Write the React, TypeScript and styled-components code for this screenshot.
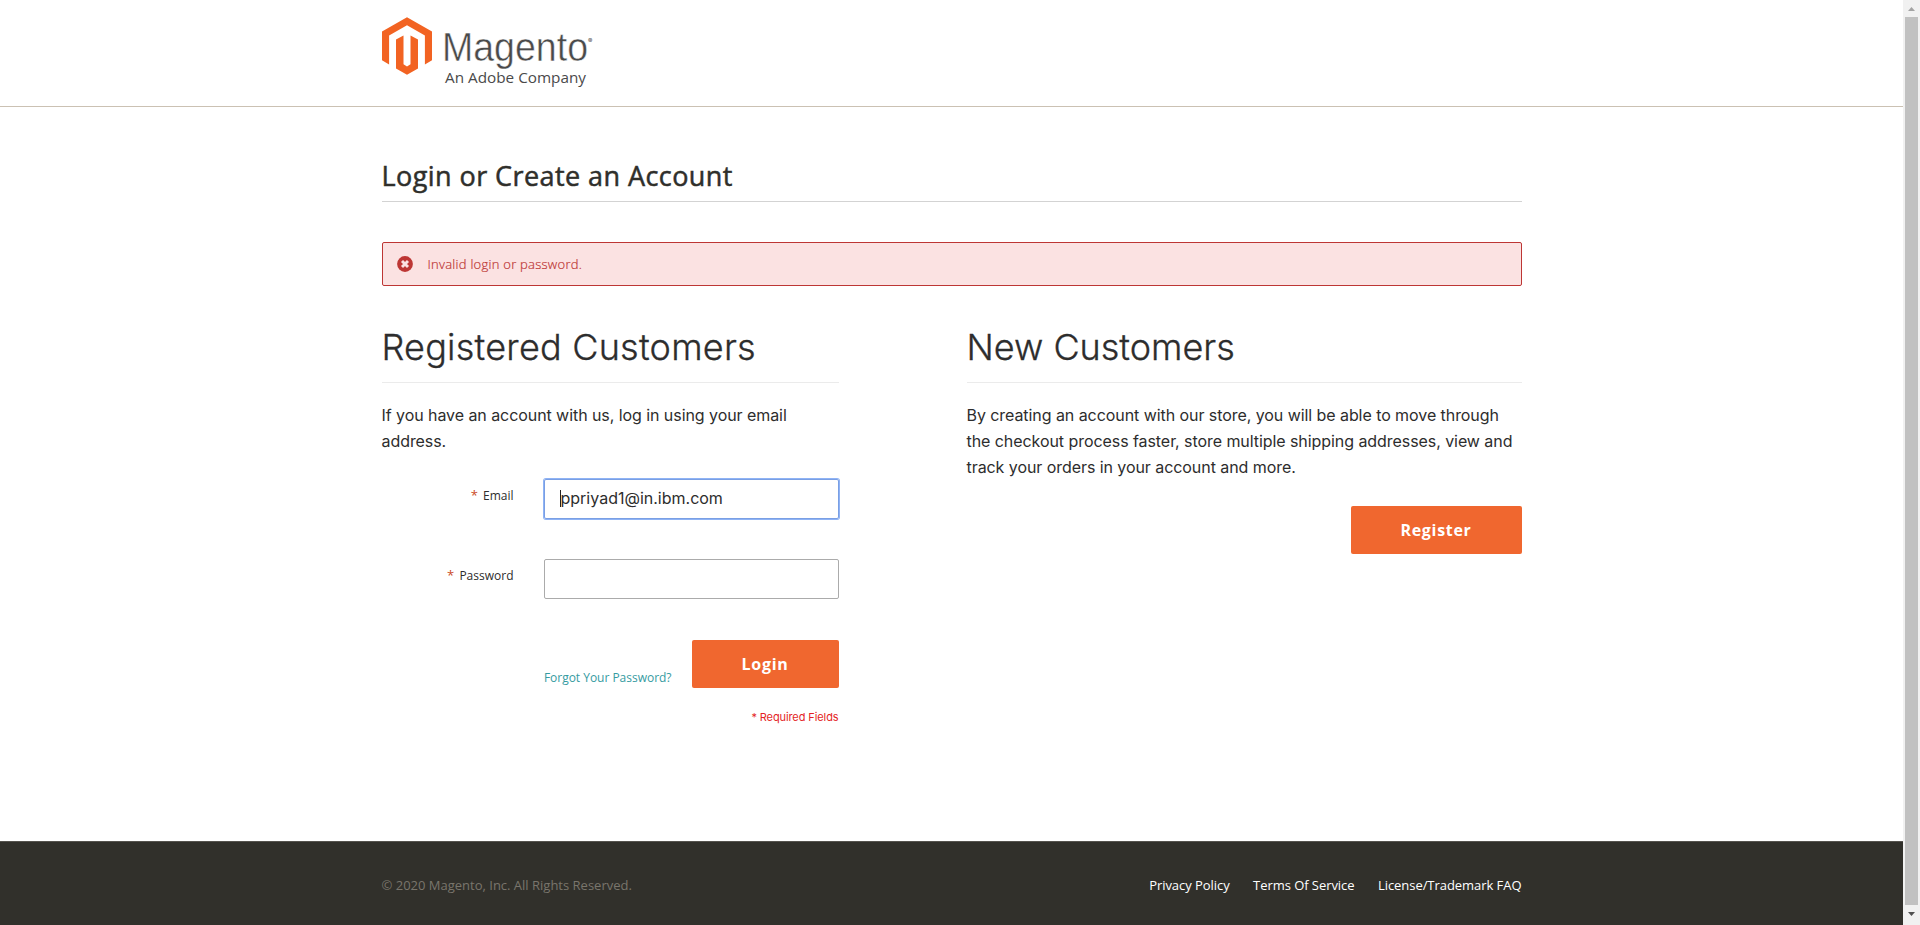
import React from 'react';
import styled, { createGlobalStyle } from 'styled-components';

const sans = '"Open Sans", "Liberation Sans", sans-serif';
const body = 'Inter, "Liberation Sans", sans-serif';

const GlobalStyle = createGlobalStyle`
  *, *::before, *::after { box-sizing: border-box; }
  body { margin: 0; background: #fff; color: #2d2d2d; font-family: ${body}; overflow: hidden; }
  h1, h2, p { margin: 0; }
`;

const Viewport = styled.div`
  display: flex;
  height: 925px;
`;

const Page = styled.div`
  flex: 1;
  min-width: 0;
  display: flex;
  flex-direction: column;
`;

const Container = styled.div`
  width: 1140px;
  margin: 0 auto;
`;

const Header = styled.header`
  height: 107px;
  border-bottom: 1px solid #cbc1b3;
`;

const Logo = styled.svg`
  display: block;
  width: 220px;
  height: 100px;
`;

const Main = styled.main`
  flex: 1;
`;

const PageTitle = styled.h1`
  height: 95px;
  padding-top: 51px;
  border-bottom: 1px solid #d3d3d3;
  font: 400 27px/36px ${sans};
  letter-spacing: 0.43px;
  -webkit-text-stroke: 0.5px #2f2f2b;
  color: #2f2f2b;
`;

const Alert = styled.div`
  display: flex;
  align-items: center;
  gap: 15px;
  height: 44px;
  margin-top: 40px;
  padding: 0 0 0 14px;
  border: 1px solid #bd3634;
  border-radius: 2px;
  background: #fbe2e2;
  color: #bd3634;
  font: 300 13px/20px ${sans};
  letter-spacing: 0.26px;
  -webkit-text-stroke: 0.2px #bd3634;
`;

const AlertIcon = styled.svg`
  width: 16px;
  height: 16px;
  flex: none;
  margin-bottom: 1px;
`;

const Columns = styled.div`
  display: flex;
  justify-content: space-between;
  padding-top: 38px;
`;

const Column = styled.section<{ $width: number }>`
  width: ${(p) => p.$width}px;
`;

const Heading = styled.h2<{ $spacing: number }>`
  height: 59px;
  border-bottom: 1px solid #ebebeb;
  font: 300 36px/46px ${body};
  letter-spacing: ${(p) => p.$spacing}px;
  -webkit-text-stroke: 0.3px #2d2d2d;
`;

const Copy = styled.p`
  padding-top: 19px;
  font-size: 16px;
  line-height: 26px;
  letter-spacing: -0.065px;
`;

const Form = styled.form`
  padding-top: 25px;
`;

const Field = styled.div`
  display: flex;
  justify-content: flex-end;
  height: 40px;
  margin-bottom: 40px;
`;

const Label = styled.label`
  padding-top: 8px;
  margin-right: 30px;
  font: 400 12px/17px ${sans};
`;

const Asterisk = styled.span`
  color: #cb4a26;
  font-size: 13px;
  margin-right: 2px;
`;

const Input = styled.div<{ $focused?: boolean }>`
  display: flex;
  align-items: center;
  width: 295px;
  height: 40px;
  padding: 0 0 2px 15px;
  border: 1px solid ${(p) => (p.$focused ? '#7a9fe4' : '#ababab')};
  border-radius: 2px;
  box-shadow: ${(p) => (p.$focused ? '0 0 0 1px #8fb3f5' : 'none')};
  font: 400 16px/20px ${body};
`;

const Caret = styled.span`
  width: 1px;
  height: 17px;
  background: #222;
`;

const Actions = styled.div`
  display: flex;
  justify-content: flex-end;
  align-items: flex-end;
  padding-top: 1px;
`;

const ForgotLink = styled.a`
  margin: 0 20px 2px 0;
  color: #369ba1;
  font: 400 12px/17px ${sans};
  letter-spacing: -0.02px;
`;

const Button = styled.button<{ $width: number }>`
  width: ${(p) => p.$width}px;
  height: 48px;
  padding: 0;
  border: 0;
  border-radius: 2px;
  background: #f0672f;
  color: #fff;
  font: 700 16px/24px ${sans};
  letter-spacing: 0.7px;
`;

const RegisterRow = styled.div`
  display: flex;
  justify-content: flex-end;
  padding-top: 26px;
`;

const Required = styled.p`
  padding-top: 21px;
  color: #e41f26;
  font-size: 11px;
  line-height: 16px;
  letter-spacing: -0.1px;
  text-align: right;
`;

const Footer = styled.footer`
  height: 84px;
  border-top: 1px solid #55534e;
  background: #31302b;
`;

const FooterRow = styled(Container)`
  display: flex;
  justify-content: space-between;
  padding-top: 33px;
  font: 400 13px/20px ${sans};
  color: #79756c;
`;

const FooterLinks = styled.nav`
  display: flex;
  gap: 23.4px;
`;

const FooterLink = styled.a`
  color: #fff;
  letter-spacing: -0.05px;
`;

const Scrollbar = styled.div`
  display: flex;
  flex-direction: column;
  align-items: center;
  width: 17px;
  background: #f1f1f1;
`;

const ScrollArrow = styled.svg`
  width: 17px;
  height: 17px;
  flex: none;
`;

const ScrollThumb = styled.div`
  width: 13px;
  height: 888px;
  background: #c1c1c1;
`;

const MagentoLogo = () => (
  <Logo viewBox="382 0 220 100">
    <g fill="#f26322">
      <path d="M407 17.2l25 14.2v28.9l-7.1 4.1V35.6L407 25.2l-17.9 10.4v28.8l-7.1-4.1V31.4z" />
      <path d="M396 39.6l7.5-4v28.7l3.5 2.1 3.5-2.1V35.6l7.5 4v28.9L407 74.8l-11-6.3z" />
    </g>
    <g fill="#4a4a4a">
      <text x="442" y="60.6" fontFamily='"Liberation Sans", sans-serif' fontSize="40" textLength="146" lengthAdjust="spacingAndGlyphs" stroke="#fff" strokeWidth="0.5">Magento</text>
      <text x="588" y="42.5" fontFamily="Inter, sans-serif" fontSize="6.5">®</text>
      <text x="445" y="83" fontFamily='"Open Sans", sans-serif' fontSize="15" textLength="141" lengthAdjust="spacingAndGlyphs">An Adobe Company</text>
    </g>
  </Logo>
);

export default function App() {
  return (
    <Viewport>
      <GlobalStyle />
      <Page>
        <Header>
          <Container><MagentoLogo /></Container>
        </Header>
        <Main>
          <Container>
            <PageTitle>Login or Create an Account</PageTitle>
            <Alert>
              <AlertIcon viewBox="0 0 16 16">
                <circle cx="8" cy="8" r="7.9" fill="#bd3634" />
                <path d="M5 5l6 6M11 5l-6 6" stroke="#fbe2e2" strokeWidth="2.9" />
              </AlertIcon>
              Invalid login or password.
            </Alert>
            <Columns>
              <Column $width={457}>
                <Heading $spacing={0.23}>Registered Customers</Heading>
                <Copy>If you have an account with us, log in using your email<br />address.</Copy>
                <Form>
                  <Field>
                    <Label><Asterisk>*</Asterisk> Email</Label>
                    <Input $focused><Caret />ppriyad1@in.ibm.com</Input>
                  </Field>
                  <Field>
                    <Label><Asterisk>*</Asterisk> Password</Label>
                    <Input />
                  </Field>
                  <Actions>
                    <ForgotLink>Forgot Your Password?</ForgotLink>
                    <Button type="button" $width={147}>Login</Button>
                  </Actions>
                  <Required>* Required Fields</Required>
                </Form>
              </Column>
              <Column $width={555}>
                <Heading $spacing={-0.02}>New Customers</Heading>
                <Copy>
                  By creating an account with our store, you will be able to move through<br />
                  the checkout process faster, store multiple shipping addresses, view and<br />
                  track your orders in your account and more.
                </Copy>
                <RegisterRow><Button type="button" $width={171}>Register</Button></RegisterRow>
              </Column>
            </Columns>
          </Container>
        </Main>
        <Footer>
          <FooterRow>
            <span>© 2020 Magento, Inc. All Rights Reserved.</span>
            <FooterLinks>
              <FooterLink>Privacy Policy</FooterLink>
              <FooterLink>Terms Of Service</FooterLink>
              <FooterLink>License/Trademark FAQ</FooterLink>
            </FooterLinks>
          </FooterRow>
        </Footer>
      </Page>
      <Scrollbar>
        <ScrollArrow viewBox="0 0 17 17"><path d="M5 11l3.5-4 3.5 4z" fill="#a3a3a3" /></ScrollArrow>
        <ScrollThumb />
        <ScrollArrow viewBox="0 0 17 17"><path d="M5 7h7l-3.5 4z" fill="#505050" /></ScrollArrow>
      </Scrollbar>
    </Viewport>
  );
}
